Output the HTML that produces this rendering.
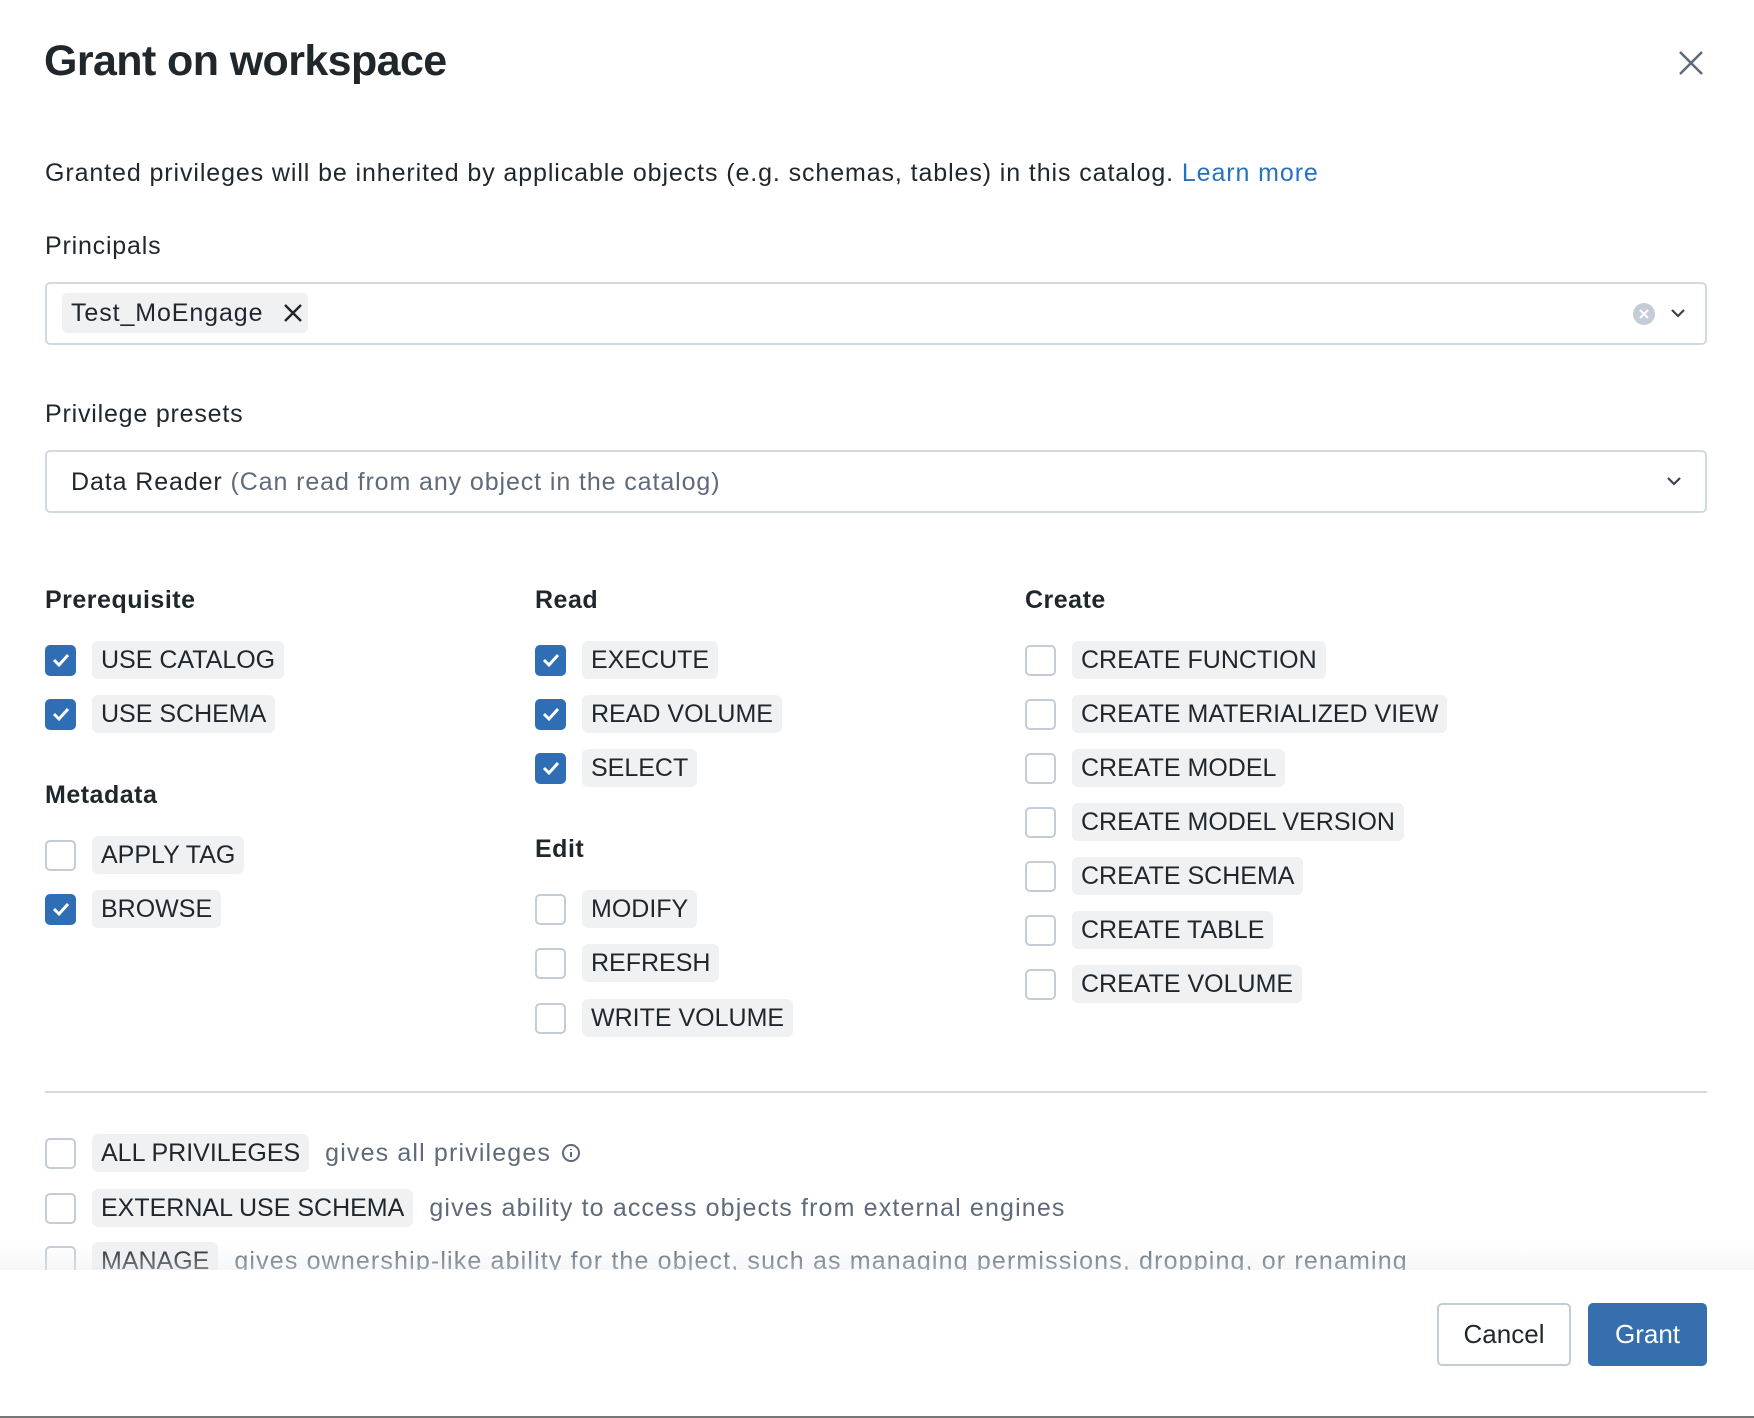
<!DOCTYPE html>
<html><head><meta charset="utf-8"><style>
*{box-sizing:border-box;margin:0;padding:0}
body{width:1754px;height:1418px;background:#fff;font-family:"Liberation Sans",sans-serif;color:#1f272d;position:relative;overflow:hidden}
.abs{position:absolute}
h1{position:absolute;left:44px;top:37px;font-size:43px;font-weight:bold;letter-spacing:-0.6px;color:#1f272d}
.t{font-size:25px;white-space:nowrap;letter-spacing:0.9px}
.lbl{font-size:25px;letter-spacing:0.8px}
.box{position:absolute;left:45px;width:1662px;height:63px;border:2px solid #d1d9e1;border-radius:5px}
.h{position:absolute;font-size:25px;font-weight:bold;letter-spacing:0.5px}
.row{position:absolute;display:flex;align-items:center;height:38px;white-space:nowrap}
.cb{width:31px;height:31px;border:2px solid #c4ccd5;border-radius:5px;margin-right:16px;flex:none;background:#fff}
.cb.on{background:#2f6eb5;border-color:#2f6eb5;display:flex;align-items:center;justify-content:center}
.tag{background:#f0f1f3;border-radius:6px;padding:0 9px;height:38px;line-height:38px;font-size:25px;color:#1f272d}
.desc{color:#5f6b7a;font-size:25px;margin-left:16px;letter-spacing:1.15px}
.btn{position:absolute;top:1303px;height:63px;border-radius:5px;font-size:26px;display:flex;align-items:center;justify-content:center}
</style></head><body>
<h1>Grant on workspace</h1>
<svg class="abs" style="left:1678px;top:50px" width="26" height="26" viewBox="0 0 26 26"><path d="M2 2L24 24M24 2L2 24" stroke="#5f6b7a" stroke-width="2.6"/></svg>
<div class="abs t" style="left:45px;top:159px">Granted privileges will be inherited by applicable objects (e.g. schemas, tables) in this catalog. <span style="color:#2672c0">Learn more</span></div>
<div class="abs lbl" style="left:45px;top:232px">Principals</div>
<div class="box" style="top:282px"></div>
<div class="abs" style="left:62px;top:293px;width:246px;height:40px;background:#f0f1f3;border-radius:5px"></div>
<div class="abs t" style="left:71px;top:299px">Test_MoEngage</div>
<svg class="abs" style="left:283px;top:303px" width="20" height="20" viewBox="0 0 20 20"><path d="M2 2L18 18M18 2L2 18" stroke="#1f272d" stroke-width="2.4"/></svg>
<svg class="abs" style="left:1632px;top:302px" width="24" height="24" viewBox="0 0 24 24"><circle cx="12" cy="12" r="11" fill="#c4ccd5"/><path d="M8 8L16 16M16 8L8 16" stroke="#fff" stroke-width="2"/></svg>
<svg class="abs" style="left:1668px;top:306px" width="20" height="14" viewBox="0 0 20 14"><path d="M4 4L10 10L16 4" stroke="#3a4550" stroke-width="2.2" fill="none"/></svg>
<div class="abs lbl" style="left:45px;top:400px">Privilege presets</div>
<div class="box" style="top:450px"></div>
<div class="abs t" style="left:71px;top:468px">Data Reader <span style="color:#5f6b7a">(Can read from any object in the catalog)</span></div>
<svg class="abs" style="left:1664px;top:474px" width="20" height="14" viewBox="0 0 20 14"><path d="M4 4L10 10L16 4" stroke="#3a4550" stroke-width="2.2" fill="none"/></svg>

<div class="h" style="left:45px;top:586px">Prerequisite</div>
<div class="h" style="left:535px;top:586px">Read</div>
<div class="h" style="left:1025px;top:586px">Create</div>
<div class="h" style="left:45px;top:781px">Metadata</div>
<div class="h" style="left:535px;top:835px">Edit</div>

<div class="row" style="left:45px;top:641px"><div class="cb on"><svg width="20" height="16" viewBox="0 0 20 16"><path d="M3 8L8 13L17 3" stroke="#fff" stroke-width="3" fill="none"/></svg></div><span class="tag">USE CATALOG</span></div>
<div class="row" style="left:45px;top:695px"><div class="cb on"><svg width="20" height="16" viewBox="0 0 20 16"><path d="M3 8L8 13L17 3" stroke="#fff" stroke-width="3" fill="none"/></svg></div><span class="tag">USE SCHEMA</span></div>
<div class="row" style="left:45px;top:836px"><div class="cb"></div><span class="tag">APPLY TAG</span></div>
<div class="row" style="left:45px;top:890px"><div class="cb on"><svg width="20" height="16" viewBox="0 0 20 16"><path d="M3 8L8 13L17 3" stroke="#fff" stroke-width="3" fill="none"/></svg></div><span class="tag">BROWSE</span></div>

<div class="row" style="left:535px;top:641px"><div class="cb on"><svg width="20" height="16" viewBox="0 0 20 16"><path d="M3 8L8 13L17 3" stroke="#fff" stroke-width="3" fill="none"/></svg></div><span class="tag">EXECUTE</span></div>
<div class="row" style="left:535px;top:695px"><div class="cb on"><svg width="20" height="16" viewBox="0 0 20 16"><path d="M3 8L8 13L17 3" stroke="#fff" stroke-width="3" fill="none"/></svg></div><span class="tag">READ VOLUME</span></div>
<div class="row" style="left:535px;top:749px"><div class="cb on"><svg width="20" height="16" viewBox="0 0 20 16"><path d="M3 8L8 13L17 3" stroke="#fff" stroke-width="3" fill="none"/></svg></div><span class="tag">SELECT</span></div>
<div class="row" style="left:535px;top:890px"><div class="cb"></div><span class="tag">MODIFY</span></div>
<div class="row" style="left:535px;top:944px"><div class="cb"></div><span class="tag">REFRESH</span></div>
<div class="row" style="left:535px;top:999px"><div class="cb"></div><span class="tag">WRITE VOLUME</span></div>

<div class="row" style="left:1025px;top:641px"><div class="cb"></div><span class="tag">CREATE FUNCTION</span></div>
<div class="row" style="left:1025px;top:695px"><div class="cb"></div><span class="tag">CREATE MATERIALIZED VIEW</span></div>
<div class="row" style="left:1025px;top:749px"><div class="cb"></div><span class="tag">CREATE MODEL</span></div>
<div class="row" style="left:1025px;top:803px"><div class="cb"></div><span class="tag">CREATE MODEL VERSION</span></div>
<div class="row" style="left:1025px;top:857px"><div class="cb"></div><span class="tag">CREATE SCHEMA</span></div>
<div class="row" style="left:1025px;top:911px"><div class="cb"></div><span class="tag">CREATE TABLE</span></div>
<div class="row" style="left:1025px;top:965px"><div class="cb"></div><span class="tag">CREATE VOLUME</span></div>

<div class="abs" style="left:45px;top:1091px;width:1662px;height:2px;background:#d1d9e1"></div>

<div class="row" style="left:45px;top:1134px"><div class="cb"></div><span class="tag">ALL PRIVILEGES</span><span class="desc">gives all privileges</span><svg style="margin-left:10px" width="20" height="20" viewBox="0 0 20 20"><circle cx="10" cy="10" r="8" stroke="#5f6b7a" stroke-width="2" fill="none"/><path d="M10 9v5M10 6v1" stroke="#5f6b7a" stroke-width="2"/></svg></div>
<div class="row" style="left:45px;top:1189px"><div class="cb"></div><span class="tag">EXTERNAL USE SCHEMA</span><span class="desc">gives ability to access objects from external engines</span></div>
<div class="abs" style="left:0;top:1200px;width:1754px;height:70px;overflow:hidden">
<div class="row" style="left:45px;top:42px"><div class="cb"></div><span class="tag">MANAGE</span><span class="desc">gives ownership-like ability for the object, such as managing permissions, dropping, or renaming</span></div>
<div class="abs" style="left:0;top:45px;width:1754px;height:25px;background:linear-gradient(rgba(255,255,255,0),rgba(235,237,240,0.45))"></div>
</div>

<div class="btn" style="left:1437px;width:134px;border:2px solid #c4ccd5;background:#fff;color:#1f272d">Cancel</div>
<div class="btn" style="left:1588px;width:119px;background:#376fae;color:#fff">Grant</div>
<div class="abs" style="left:0;top:1416px;width:1754px;height:2px;background:#777"></div>
</body></html>
